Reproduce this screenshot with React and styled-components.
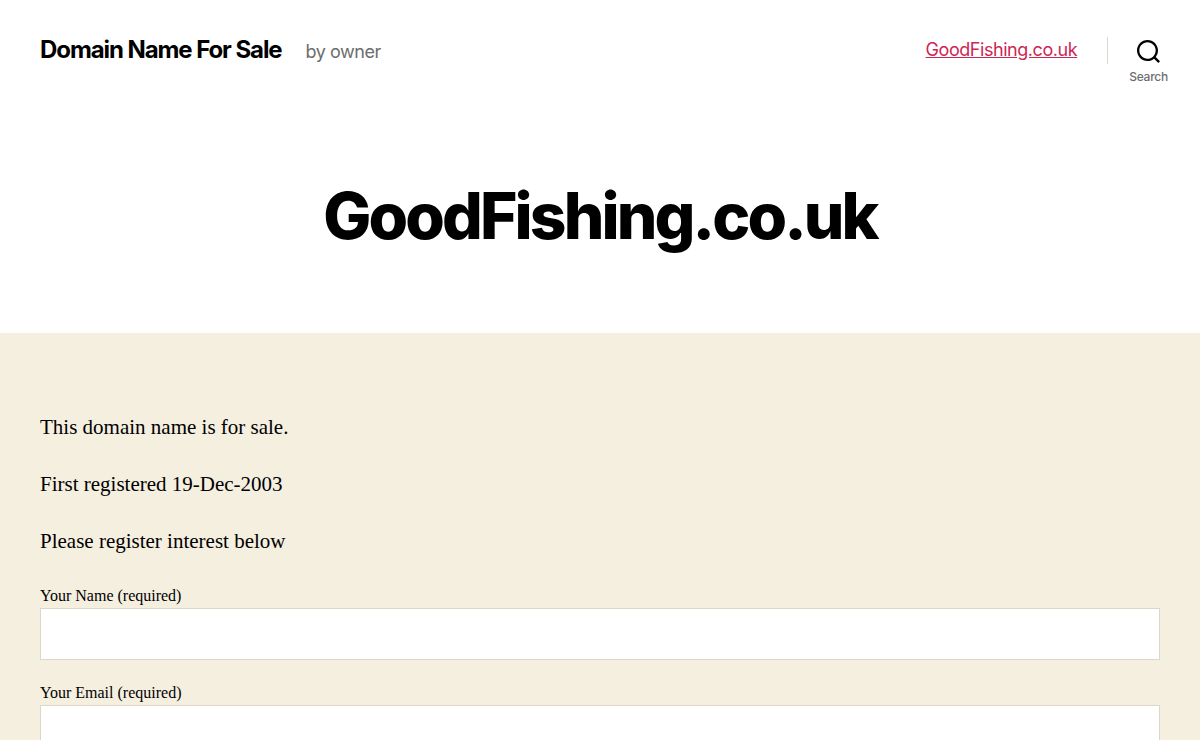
import { useId } from "react";
import styled, { createGlobalStyle } from "styled-components";

const GlobalStyle = createGlobalStyle`
  *,
  *::before,
  *::after {
    box-sizing: border-box;
  }

  body {
    margin: 0;
    background-color: #f5efe0;
    color: #000;
    font-family: "Liberation Serif", "Times New Roman", serif;
  }
`;

const SiteHeader = styled.header`
  display: flex;
  align-items: flex-start;
  justify-content: space-between;
  padding: 36px 24px 0 40px;
  background-color: #fff;
  font-family: Inter, sans-serif;
`;

const Titles = styled.div`
  display: flex;
  align-items: baseline;
  gap: 24px;
`;

const SiteTitle = styled.a`
  color: #000;
  font-size: 24px;
  font-weight: 700;
  line-height: 28px;
  letter-spacing: -0.045em;
  text-decoration: none;
`;

const Tagline = styled.p`
  margin: 0;
  color: #6d6d6d;
  font-size: 18px;
  font-weight: 400;
  line-height: 28px;
  letter-spacing: -0.025em;
`;

const Navigation = styled.nav`
  display: flex;
  align-items: flex-start;
`;

const MenuLink = styled.a`
  color: #cd2653;
  font-size: 18px;
  font-weight: 400;
  line-height: 28px;
  letter-spacing: -0.025em;
  text-decoration: underline;
`;

const SearchWrapper = styled.div`
  display: flex;
  margin-left: 30px;

  &::before {
    content: "";
    width: 1px;
    height: 27px;
    margin-top: 1px;
    background-color: #dcd7ca;
  }
`;

const SearchButton = styled.button`
  display: flex;
  flex-direction: column;
  align-items: center;
  gap: 5px;
  margin-left: 13px;
  padding: 4px 8px 0;
  border: 0;
  background: none;
  color: #6d6d6d;
  font-family: inherit;
  font-size: 12px;
  font-weight: 500;
  line-height: 16px;
  letter-spacing: -0.02em;
  cursor: pointer;

  svg {
    width: 23px;
    height: 23px;
    margin-bottom: 1px;
    color: #000;
  }
`;

const EntryHeader = styled.div`
  padding: 95px 40px 81px;
  background-color: #fff;
  text-align: center;
`;

const EntryTitle = styled.h1`
  margin: 0;
  font-family: Inter, sans-serif;
  font-size: 64px;
  font-weight: 800;
  line-height: 72px;
  letter-spacing: -0.045em;
`;

const EntryContent = styled.div`
  padding: 80px 40px;
`;

const Paragraph = styled.p`
  margin: 0 0 28px;
  font-size: 21px;
  line-height: 29px;
`;

const Field = styled.div`
  margin-bottom: 21px;
`;

const Label = styled.label`
  display: block;
  font-size: 16px;
  line-height: 24px;
`;

const Input = styled.input`
  display: block;
  width: 100%;
  height: 52px;
  padding: 12px 16px;
  border: 1px solid #dcd7ca;
  border-radius: 0;
  background-color: #fff;
  font-family: inherit;
  font-size: 16px;
`;

const SearchIcon = () => (
  <svg viewBox="0 0 23 23" aria-hidden="true">
    <path
      fill="currentColor"
      d="M38.710696,48.0601792 L43,52.3494831 L41.3494831,54 L37.0601792,49.710696 C35.2632422,51.1481185 32.9839107,52.0076499 30.5038249,52.0076499 C24.7027226,52.0076499 20,47.3049272 20,41.5038249 C20,35.7027226 24.7027226,31 30.5038249,31 C36.3049272,31 41.0076499,35.7027226 41.0076499,41.5038249 C41.0076499,43.9839107 40.1481185,46.2632422 38.710696,48.0601792 Z M36.3875844,47.1716785 C37.8030221,45.7026647 38.6734666,43.7048964 38.6734666,41.5038249 C38.6734666,36.9918565 35.0157934,33.3341833 30.5038249,33.3341833 C25.9918565,33.3341833 22.3341833,36.9918565 22.3341833,41.5038249 C22.3341833,46.0157934 25.9918565,49.6734666 30.5038249,49.6734666 C32.7048964,49.6734666 34.7026647,48.8030221 36.1716785,47.3875844 C36.2023931,47.347638 36.2360451,47.3092237 36.2726343,47.2726343 C36.3092237,47.2360451 36.347638,47.2023931 36.3875844,47.1716785 Z"
      transform="translate(-20 -31)"
    />
  </svg>
);

const FormField = ({ label, type, name }) => {
  const id = useId();

  return (
    <Field>
      <Label htmlFor={id}>{label}</Label>
      <Input id={id} type={type} name={name} required />
    </Field>
  );
};

export default function App() {
  return (
    <>
      <GlobalStyle />
      <SiteHeader>
        <Titles>
          <SiteTitle href="/">Domain Name For Sale</SiteTitle>
          <Tagline>by owner</Tagline>
        </Titles>
        <Navigation>
          <MenuLink href="/">GoodFishing.co.uk</MenuLink>
          <SearchWrapper>
            <SearchButton type="button">
              <SearchIcon />
              Search
            </SearchButton>
          </SearchWrapper>
        </Navigation>
      </SiteHeader>
      <main>
        <EntryHeader>
          <EntryTitle>GoodFishing.co.uk</EntryTitle>
        </EntryHeader>
        <EntryContent>
          <Paragraph>This domain name is for sale.</Paragraph>
          <Paragraph>First registered 19-Dec-2003</Paragraph>
          <Paragraph>Please register interest below</Paragraph>
          <form>
            <FormField label="Your Name (required)" type="text" name="name" />
            <FormField label="Your Email (required)" type="email" name="email" />
          </form>
        </EntryContent>
      </main>
    </>
  );
}
